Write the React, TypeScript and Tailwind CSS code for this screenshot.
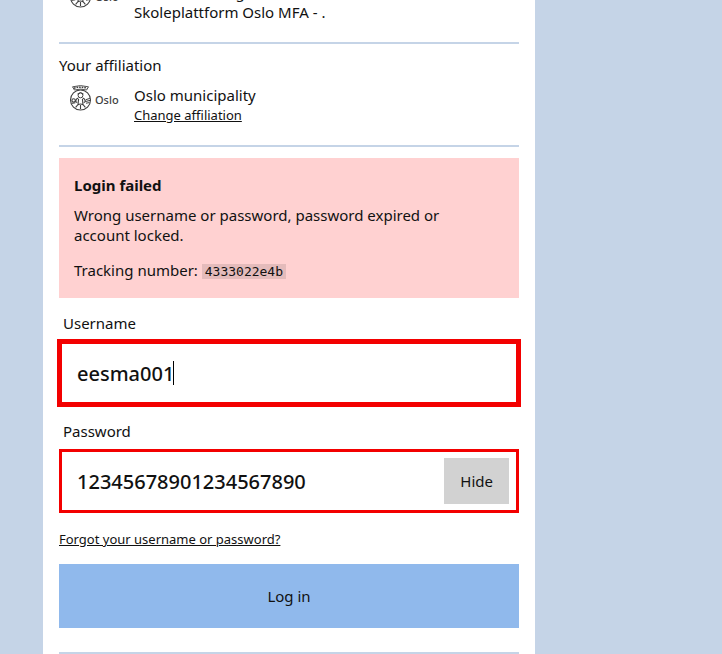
import React from 'react';

const OsloLogo: React.FC = () => (
  <svg width="54" height="26" viewBox="0 0 54 26" fill="none" stroke="#3f3f3f" role="img" aria-label="Oslo">
    {/* Crown */}
    <path d="M3.5 1.8 Q11.5 -0.6 19.5 1.8 L17.6 5 Q11.5 3.2 5.4 5 Z" strokeWidth="0.9" />
    <path d="M5 3.2 Q11.5 1.2 18 3.2" strokeWidth="1.5" strokeDasharray="1.6 1" />
    <circle cx="11.5" cy="15" r="10" strokeWidth="1.1" />
    {/* Seated figure */}
    <circle cx="11.5" cy="10.4" r="2.4" strokeWidth="1" />
    <path d="M8.4 9 Q11.5 6 14.6 9" strokeWidth="0.9" />
    <path d="M9.4 13 Q7 13.4 6.6 16.4 L8.2 17.6 M13.6 13 Q16 13.4 16.4 16.4 L14.8 17.6" strokeWidth="1.1" />
    <path d="M9.6 14 L9 19.6 L6.6 22.4 M13.4 14 L14 19.6 L16.4 22.4 M9 19.8 Q11.5 18.2 14 19.8 M11.5 20 V24" strokeWidth="1.1" />
    <circle cx="4.6" cy="15.4" r="1.7" strokeWidth="1.1" />
    <path d="M2.6 18.4 L6.4 17.8 M17 14.6 L20.8 13.4 M17 16.4 L21 15.4 M17 18.2 L20.4 17.6" strokeWidth="1" />
    <text x="26" y="19" fontSize="11" fontWeight="500" fill="#3f3f3f" stroke="none">Oslo</text>
  </svg>
);

const Divider: React.FC = () => <hr className="h-0.5 border-0 bg-[#c5d4e7]" />;

const App: React.FC = () => {
  const [username, setUsername] = React.useState('eesma001');
  const [password, setPassword] = React.useState('12345678901234567890');
  const [visible, setVisible] = React.useState(true);

  return (
    <div className="min-h-screen overflow-hidden bg-[#c5d4e7] font-['Noto_Sans',sans-serif] text-[15px] leading-5 text-[#111]">
      <main className="-mt-[18px] ml-[43px] min-h-screen max-w-[492px] bg-white px-4">
        {/* Service */}
        <section className="flex gap-3 pb-5 pl-[10px]">
          <div className="w-[53px] shrink-0">
            <OsloLogo />
          </div>
          <p>
            Oslo Utdanning
            <br />
            Skoleplattform Oslo MFA - .
          </p>
        </section>

        <Divider />

        {/* Affiliation */}
        <section className="pt-[11px] pb-5">
          <h2>Your affiliation</h2>
          <div className="mt-[10px] flex gap-3 pl-[10px]">
            <div className="w-[53px] shrink-0">
              <OsloLogo />
            </div>
            <div>
              <p>Oslo municipality</p>
              <a href="#affiliation" className="block text-[13px] underline">Change affiliation</a>
            </div>
          </div>
        </section>

        <Divider />

        {/* Error message */}
        <section role="alert" className="mt-[11px] bg-[#ffd1d1] px-[15px] pt-[17px] pb-4">
          <h2 className="font-bold">Login failed</h2>
          <p className="mt-[10px] pr-10">Wrong username or password, password expired or account locked.</p>
          <p className="mt-[15px]">
            Tracking number:{' '}
            <code className="bg-[#e4bbbb] px-[3px] font-['DejaVu_Sans_Mono',monospace] text-[13px]">4333022e4b</code>
          </p>
        </section>

        <form onSubmit={(e) => e.preventDefault()}>
          <label htmlFor="username" className="mt-[15px] block px-1">Username</label>
          <div className="relative mt-2">
            <input
              id="username"
              value={username}
              onChange={(e) => setUsername(e.target.value)}
              className="block h-16 w-full border-3 border-[#f30000] bg-white px-[15px] text-xl font-medium outline-2 outline-[#f30000]"
            />
            <span className="absolute top-5 left-[114px] h-6 w-px bg-black"></span>
          </div>

          <label htmlFor="password" className="mt-4 block px-1">Password</label>
          <div className="mt-2 flex h-16 items-center border-3 border-[#f30000] pr-[7px]">
            <input
              id="password"
              type={visible ? 'text' : 'password'}
              value={password}
              onChange={(e) => setPassword(e.target.value)}
              className="h-full min-w-0 grow px-[15px] text-xl font-medium outline-none"
            />
            <button type="button" onClick={() => setVisible(!visible)} className="h-[46px] bg-[#d2d2d2] px-4">
              {visible ? 'Hide' : 'Show'}
            </button>
          </div>

          <a href="#forgot" className="mt-4 block text-[13px] underline">Forgot your username or password?</a>
          <button type="submit" className="mt-[15px] mb-6 h-16 w-full bg-[#90b9ec]">Log in</button>
        </form>

        <Divider />
      </main>
    </div>
  );
};

export default App;
